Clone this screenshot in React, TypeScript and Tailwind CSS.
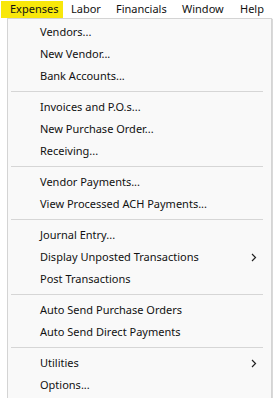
import React from "react";

type Item = { label: string; sub?: boolean } | "sep";

const items: Item[] = [
  { label: "Vendors..." },
  { label: "New Vendor..." },
  { label: "Bank Accounts..." },
  "sep",
  { label: "Invoices and P.O.s..." },
  { label: "New Purchase Order..." },
  { label: "Receiving..." },
  "sep",
  { label: "Vendor Payments..." },
  { label: "View Processed ACH Payments..." },
  "sep",
  { label: "Journal Entry..." },
  { label: "Display Unposted Transactions", sub: true },
  { label: "Post Transactions" },
  "sep",
  { label: "Auto Send Purchase Orders" },
  { label: "Auto Send Direct Payments" },
  "sep",
  { label: "Utilities", sub: true },
  { label: "Options..." },
];

function Chevron() {
  return (
    <svg width="6" height="9" viewBox="0 0 6 9" className="shrink-0">
      <path d="M1 1 L4.5 4.5 L1 8" fill="none" stroke="#222" strokeWidth="1.2" />
    </svg>
  );
}

export default function App() {
  return (
    <div
      className="w-[273px] h-[398px] bg-white overflow-hidden relative text-[11px] text-[#111]"
      style={{ fontFamily: '"Noto Sans", "Segoe UI", sans-serif' }}
    >
      <div className="flex h-[18px] items-stretch pt-[1px]">
        <div className="ml-[1px] w-[62px] pl-[9px] bg-[#f8e70a] flex items-center">Expenses</div>
        <div className="w-[45px] pl-[8px] flex items-center">Labor</div>
        <div className="w-[66px] pl-[8px] flex items-center">Financials</div>
        <div className="w-[58px] pl-[8px] flex items-center">Window</div>
        <div className="pl-[8px] flex items-center">Help</div>
      </div>
      <div className="absolute left-[7px] top-[18px] w-[265px] h-[385px] bg-[#f9f9f9] border border-[#d4d4d4] shadow-[1px_1px_1px_rgba(0,0,0,0.15)] pt-[2px]">
        {items.map((it, i) =>
          it === "sep" ? (
            <div key={i} className="h-[9px] pt-[4px] pl-[3px] pr-[8px]">
              <div className="h-px bg-[#d6d6d6]" />
            </div>
          ) : (
            <div key={i} className="h-[22px] flex items-center pl-[32px] pr-[14px]">
              <span className="flex-1 whitespace-nowrap">{it.label}</span>
              {it.sub && <Chevron />}
            </div>
          )
        )}
      </div>
    </div>
  );
}
